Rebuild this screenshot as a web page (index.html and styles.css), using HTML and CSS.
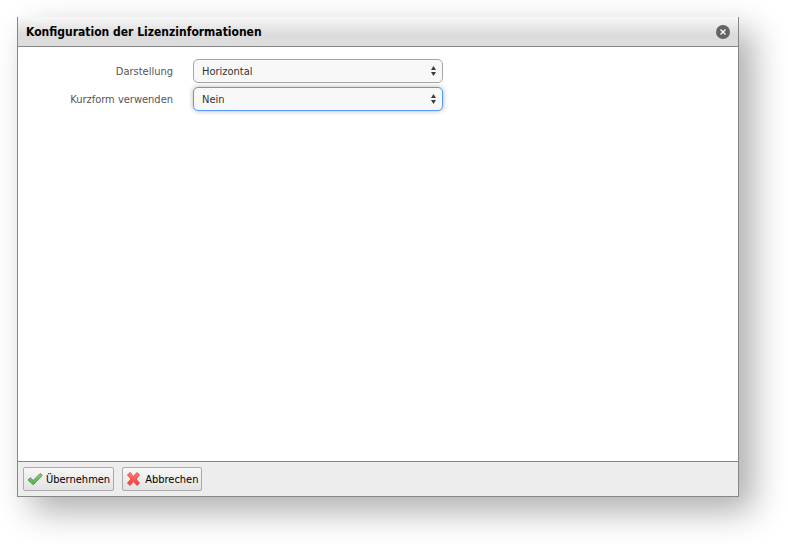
FILE: index.html
```html
<!DOCTYPE html>
<html lang="de">
<head>
<meta charset="utf-8">
<meta name="viewport" content="width=device-width, initial-scale=1">
<title>Konfiguration der Lizenzinformationen</title>
<link rel="stylesheet" href="styles.css">
</head>
<body>
<main class="dialog" role="dialog" aria-labelledby="dialog-title">
  <header class="dialog-header">
    <h1 class="dialog-title" id="dialog-title">Konfiguration der Lizenzinformationen</h1>
    <button class="close" type="button" aria-label="Schließen">
      <svg viewBox="0 0 14 14" width="14" height="14" aria-hidden="true">
        <circle cx="7" cy="7" r="7" fill="#62645e"/>
        <path d="M4.500 4.500l5 5M9.500 4.500l-5 5" stroke="#fff" stroke-width="1.300"/>
      </svg>
    </button>
  </header>
  <form class="dialog-body">
    <div class="row">
      <label class="label" for="layout">Darstellung</label>
      <div class="picker">
        <select class="select" id="layout"><option>Horizontal</option><option>Vertikal</option></select>
        <svg class="arrows" viewBox="0 0 5 10" width="5" height="10" aria-hidden="true"><path d="M0 4L2.500 0L5 4zM0 6h5L2.500 10z" fill="#3c3c3c"/></svg>
      </div>
    </div>
    <div class="row">
      <label class="label" for="short">Kurzform verwenden</label>
      <div class="picker">
        <select class="select select-active" id="short"><option>Nein</option><option>Ja</option></select>
        <svg class="arrows" viewBox="0 0 5 10" width="5" height="10" aria-hidden="true"><path d="M0 4L2.500 0L5 4zM0 6h5L2.500 10z" fill="#3c3c3c"/></svg>
      </div>
    </div>
  </form>
  <footer class="dialog-footer">
    <button class="button" type="button">
      <svg viewBox="0 0 16 16" width="16" height="16" aria-hidden="true">
        <defs><linearGradient id="green" x1="0" y1="0" x2="0" y2="1"><stop offset="0" stop-color="#8fd07f"/><stop offset="1" stop-color="#4fae48"/></linearGradient></defs>
        <path d="M1 9l2.200-2.200 3 2.700L13.200 2.500l2 1.800L6.300 13.700z" fill="url(#green)" stroke="#4b9a45" stroke-linejoin="round"/>
      </svg>
      <span class="button-text">Übernehmen</span>
    </button>
    <button class="button" type="button">
      <svg viewBox="0 0 16 16" width="16" height="16" aria-hidden="true">
        <defs><linearGradient id="red" x1="0" y1="0" x2="0" y2="1"><stop offset="0" stop-color="#ff8078"/><stop offset="1" stop-color="#fb3434"/></linearGradient></defs>
        <path d="M1.500 4L4 1.500L7.500 5.500L11 1.500L13.500 4L10 8L13.500 12L11 14.500L7.500 10.500L4 14.500L1.500 12L5 8z" fill="url(#red)" stroke="#ec4a4a" stroke-linejoin="round"/>
      </svg>
      <span class="button-text">Abbrechen</span>
    </button>
  </footer>
</main>
</body>
</html>
```
FILE: styles.css
```css
* {
  box-sizing: border-box;
}

body {
  display: flex;
  min-height: 100vh;
  margin: 0;
  padding: 17px 48px 48px 17px;
  background: #fff;
  color: #000;
  font: 11px/16px Tahoma, "DejaVu Sans Condensed", "DejaVu Sans", sans-serif;
}

.dialog {
  display: flex;
  flex: 1;
  flex-direction: column;
  border: 1px solid #868686;
  border-top: 0;
  background: #fff;
  box-shadow: 14px 14px 32px rgba(0, 0, 0, 0.32);
}

.dialog-header {
  display: flex;
  align-items: center;
  justify-content: space-between;
  height: 30px;
  padding: 0 8px;
  border-bottom: 1px solid #868686;
  background: linear-gradient(#f8f8f8, #dcdcdc 60%);
}

.dialog-title {
  margin: 0;
  font-size: 12px;
  font-weight: bold;
}

.close {
  display: flex;
  padding: 0;
  border: 0;
  background: none;
}

.dialog-body {
  display: flex;
  flex: 1;
  flex-direction: column;
  gap: 4px;
  padding: 12px 0;
}

.row {
  display: flex;
  align-items: center;
  gap: 20px;
}

.label {
  width: 155px;
  padding-top: 2px;
  color: #555;
  text-align: right;
}

.picker {
  position: relative;
  width: 250px;
}

.select {
  display: block;
  width: 100%;
  height: 24px;
  padding: 2px 20px 0 8px;
  border: 1px solid #a6a6a6;
  border-radius: 5px;
  outline: 0;
  appearance: none;
  background: #f8f8f8;
  color: #333;
  font: inherit;
}

.select-active {
  border-color: #5897fb;
  box-shadow: 0 0 5px rgba(0, 0, 0, 0.3);
}

.arrows {
  position: absolute;
  top: 7px;
  right: 7px;
  pointer-events: none;
}

.dialog-footer {
  display: flex;
  gap: 8px;
  padding: 5px;
  border-top: 1px solid #868686;
  background: #ededed;
}

.button {
  display: flex;
  align-items: center;
  gap: 3px;
  height: 24px;
  padding: 0 3px;
  border: 1px solid #aaa;
  border-radius: 2px;
  background: linear-gradient(#f7f7f7, #e2e2e2);
  color: #000;
  font: inherit;
}

.button-text {
  padding-top: 2px;
}
```
